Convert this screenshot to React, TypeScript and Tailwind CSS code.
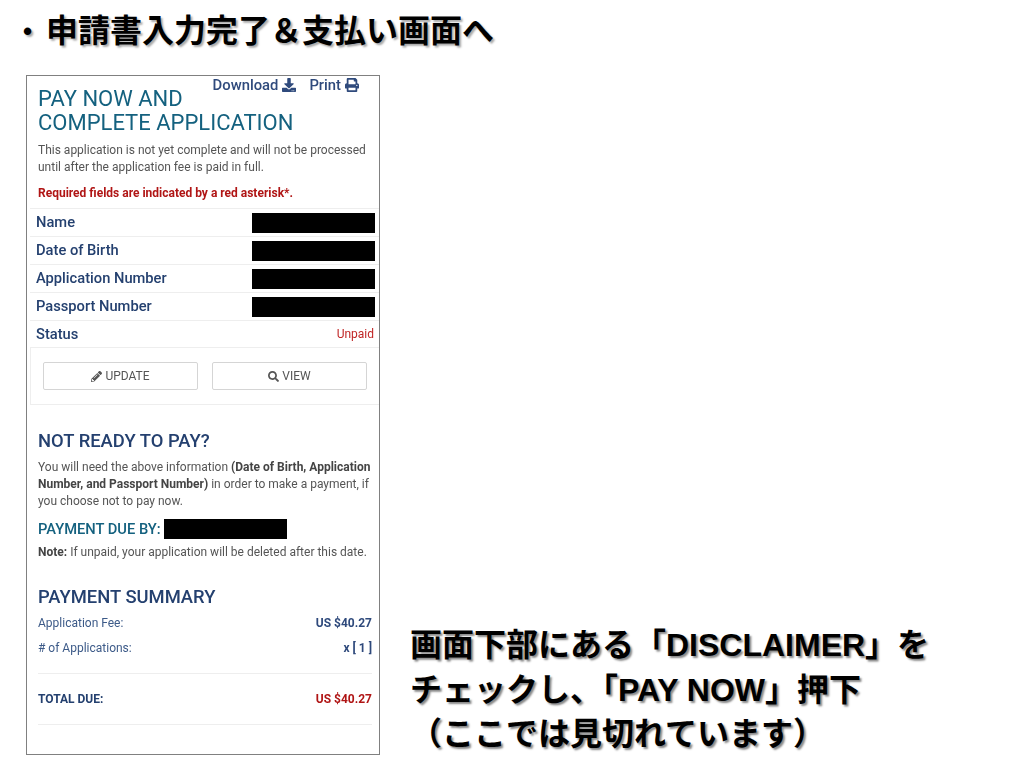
import { FaDownload, FaPencilAlt, FaPrint, FaSearch } from "react-icons/fa";

const rows = ["Name", "Date of Birth", "Application Number", "Passport Number"];

function InfoRow({ label }: { label: string }) {
  return (
    <div className="flex h-[28px] items-center justify-between border-b border-[#eeeeee] pl-[6px] pr-[4px]">
      <span className="text-[14.7px] font-medium text-[#24406f]">{label}</span>
      <div className="h-[20px] w-[123px] bg-black" />
    </div>
  );
}

function ActionButton({ icon, label }: { icon: React.ReactNode; label: string }) {
  return (
    <button className="flex h-[28px] w-[155px] items-center justify-center gap-[3px] rounded-[2px] border border-[#d5d5d5] bg-white text-[12px] font-normal text-[#555555]">
      {icon}
      {label}
    </button>
  );
}

function PhoneShot() {
  return (
    <div className="h-[680px] w-[354px] shrink-0 overflow-hidden border border-[#808080] bg-white font-['Roboto',sans-serif] font-normal blur-[0.3px]">
      <div className="flex h-[11px] justify-end gap-[13px] pr-[20px] text-[14.8px] leading-[18px] font-medium text-[#2f4a7c]">
        <span className="flex h-[18px] items-center gap-[4px]">
          Download <FaDownload className="text-[14px]" />
        </span>
        <span className="flex h-[18px] items-center gap-[4px]">
          Print <FaPrint className="text-[14px]" />
        </span>
      </div>
      <h1 className="pl-[11px] text-[22px] leading-[24px] font-normal text-[#14617f]">
        PAY NOW AND
        <br />
        COMPLETE APPLICATION
      </h1>
      <p className="pl-[11px] pt-[7px] text-[12px] leading-[17px] whitespace-nowrap text-[#555555]">
        This application is not yet complete and will not be processed
        <br />
        until after the application fee is paid in full.
      </p>
      <p className="pl-[11px] pt-[9px] text-[12px] leading-[17px] font-bold text-[#b01515]">
        Required fields are indicated by a red asterisk*.
      </p>

      <div className="ml-[3px] mt-[6px] border-t border-[#eeeeee]">
        {rows.map((r) => (
          <InfoRow key={r} label={r} />
        ))}
        <div className="flex h-[27px] items-center justify-between border-b border-[#eeeeee] pl-[6px] pr-[5px]">
          <span className="text-[14.7px] font-medium text-[#24406f]">Status</span>
          <span className="text-[12px] text-[#c02525]">Unpaid</span>
        </div>
        <div className="flex h-[57px] items-center gap-[14px] border-b border-l border-[#eeeeee] pl-[12px]">
          <ActionButton icon={<FaPencilAlt className="text-[11px]" />} label="UPDATE" />
          <ActionButton icon={<FaSearch className="text-[11px]" />} label="VIEW" />
        </div>
      </div>

      <div className="pl-[11px] pr-[7px]">
        <h2 className="pt-[25px] text-[18.4px] leading-[22px] font-medium text-[#24406f]">NOT READY TO PAY?</h2>
        <p className="pt-[7px] text-[12px] leading-[17px] whitespace-nowrap text-[#555555]">
          You will need the above information <b className="font-bold text-[#444444]">(Date of Birth, Application</b>
          <br />
          <b className="font-bold text-[#444444]">Number, and Passport Number)</b> in order to make a payment, if
          <br />
          you choose not to pay now.
        </p>
        <div className="flex items-center gap-[3px] pt-[8px]">
          <span className="text-[14.7px] font-medium text-[#14617f]">PAYMENT DUE BY:</span>
          <div className="h-[20px] w-[123px] bg-black" />
        </div>
        <p className="pt-[4px] text-[12px] leading-[17px] whitespace-nowrap text-[#555555]">
          <b className="font-bold text-[#444444]">Note:</b> If unpaid, your application will be deleted after this date.
        </p>
        <h2 className="pt-[25px] text-[18.4px] leading-[22px] font-medium text-[#24406f]">PAYMENT SUMMARY</h2>
        <div className="flex justify-between pt-[7px] text-[12px] leading-[17px]">
          <span className="text-[#3c5a88]">Application Fee:</span>
          <span className="font-bold text-[#2f4a7c]">US $40.27</span>
        </div>
        <div className="flex justify-between pt-[8px] text-[12px] leading-[17px]">
          <span className="text-[#3c5a88]"># of Applications:</span>
          <span className="font-bold text-[#2f4a7c]">x [ 1 ]</span>
        </div>
        <div className="mt-[16px] flex h-[52px] items-center justify-between border-y border-[#eeeeee] text-[12px] font-bold">
          <span className="text-[#24406f]">TOTAL DUE:</span>
          <span className="text-[#b01515]">US $40.27</span>
        </div>
      </div>
    </div>
  );
}

export default function App() {
  return (
    <div className="flex h-[769px] w-[1024px] flex-col overflow-hidden bg-white font-['Liberation_Sans','Noto_Sans_CJK_JP',sans-serif] font-bold text-black [text-shadow:2px_2px_2px_#aaaaaa]">
      <div className="flex h-[75px] items-start pl-[23px] pt-[11px] text-[32px] leading-[40px]">
        <span className="w-[23px] text-[26px]">•</span>
        <span>申請書入力完了＆支払い画面へ</span>
      </div>
      <div className="flex items-start pl-[26px] [text-shadow:none]">
        <PhoneShot />
        <div className="ml-[30px] mt-[548px] w-[560px] text-[32px] leading-[44.5px] [text-shadow:2px_2px_2px_#888888]">
          画面下部にある「DISCLAIMER」を
          <br />
          チェックし、「PAY NOW」押下
          <br />
          （ここでは見切れています）
        </div>
      </div>
    </div>
  );
}
